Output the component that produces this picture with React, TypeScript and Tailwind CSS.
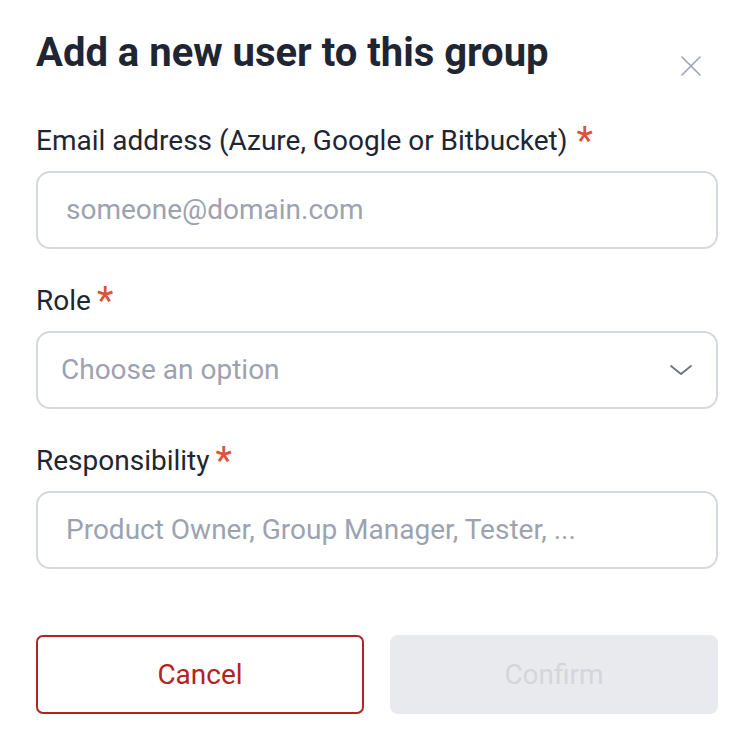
export default function App() {
  return (
    <div className="min-h-screen w-full bg-white font-['Roboto',sans-serif]">
      <div className="pl-9 pr-[35px] pt-[29px]">
        <div className="flex items-start justify-between">
          <h1 className="text-[40px] leading-[48px] font-bold text-[#1f2532]">
            Add a new user to this group
          </h1>
          <button className="mt-[27px] mr-[17px] h-5 w-5 text-[#9ca3af]" aria-label="Close">
            <svg viewBox="0 0 20 20" className="h-5 w-5" fill="none" stroke="currentColor" strokeWidth="1.6" strokeLinecap="round">
              <path d="M1 1L19 19M19 1L1 19" />
            </svg>
          </button>
        </div>

        <label className="mt-[47px] flex text-[28px] leading-[34px] text-[#1f2532]">
          Email address (Azure, Google or Bitbucket)
          <span className="ml-[9px] text-[38px] leading-[34px] text-[#e0503a]">*</span>
        </label>
        <div className="mt-[13px] flex h-[78px] items-center rounded-[14px] border-2 border-[#d5d8de] px-[28px] text-[28px] text-[#9ca3af]">
          someone@domain.com
        </div>

        <label className="mt-[35px] flex text-[28px] leading-[34px] text-[#1f2532]">
          Role
          <span className="ml-[6px] text-[38px] leading-[34px] text-[#e0503a]">*</span>
        </label>
        <div className="mt-[13px] flex h-[78px] items-center justify-between rounded-[14px] border-2 border-[#d5d8de] pl-[23px] pr-[24px] text-[28px] text-[#9ca3af]">
          <span>Choose an option</span>
          <svg viewBox="0 0 22 10" className="h-[10px] w-[22px]" fill="none" stroke="#6b7280" strokeWidth="1.8" strokeLinecap="round" strokeLinejoin="round">
            <path d="M1 1L11 9L21 1" />
          </svg>
        </div>

        <label className="mt-[35px] flex text-[28px] leading-[34px] text-[#1f2532]">
          Responsibility
          <span className="ml-[6px] text-[38px] leading-[34px] text-[#e0503a]">*</span>
        </label>
        <div className="mt-[13px] flex h-[78px] items-center rounded-[14px] border-2 border-[#d5d8de] px-[28px] text-[28px] text-[#9ca3af]">
          Product Owner, Group Manager, Tester, ...
        </div>

        <div className="mt-[66px] grid grid-cols-2 gap-[26px]">
          <button className="h-[79px] rounded-[7px] border-2 border-[#b42323] text-[28px] text-[#b42323]">
            Cancel
          </button>
          <button className="h-[79px] rounded-[8px] bg-[#e9eaee] text-[28px] text-[#d3d6dc]" disabled>
            Confirm
          </button>
        </div>
      </div>
    </div>
  );
}
